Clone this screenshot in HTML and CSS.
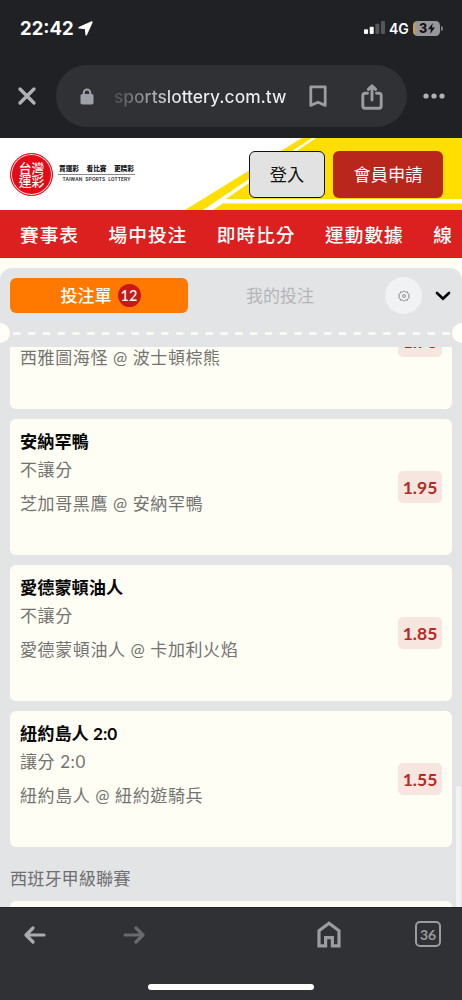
FILE: index.html
```html
<!DOCTYPE html>
<html lang="zh-Hant">
<head>
<meta charset="utf-8">
<title>台灣運彩</title>
<link rel="stylesheet" href="styles.css">
</head>
<body>
<div class="phone">
  <div class="status">
    <span class="time">22:42</span>
    <svg class="loc" width="15" height="15" viewBox="0 0 15 15"><path d="M13.9 1.1 8.2 13.7 7.6 7.4 1.1 6.8z" fill="#fff" stroke="#fff" stroke-width="1.6" stroke-linejoin="round"/></svg>
    <svg class="signal" width="21" height="14" viewBox="0 0 21 14"><rect x="0" y="8.2" width="4" height="4.8" rx="1" fill="#fff"/><rect x="5.7" y="5.8" width="4" height="7.2" rx="1" fill="#fff"/><rect x="11.4" y="2.8" width="4" height="10.2" rx="1" fill="#55565a"/><rect x="17" y="0" width="4" height="13" rx="1" fill="#55565a"/></svg>
    <span class="net">4G</span>
    <span class="battery"><span>3</span><svg width="7" height="11" viewBox="0 0 7 11"><path d="M4.8 0 0 6.2h3L2 11l5-6.4H4z" fill="#111"/></svg></span>
    <span class="nub"></span>
  </div>
  <div class="toolbar">
    <svg class="close" width="20" height="20" viewBox="0 0 20 20"><path d="M3 3 17 17M17 3 3 17" stroke="#b0b1b5" stroke-width="3.4" stroke-linecap="round"/></svg>
    <div class="address">
      <svg class="lock" width="14" height="17" viewBox="0 0 14 17"><path d="M3.8 7V4.6a3.2 3.2 0 0 1 6.4 0V7" fill="none" stroke="#9ea1a9" stroke-width="2"/><rect x=".5" y="6" width="13" height="10.5" rx="1.8" fill="#9ea1a9"/></svg>
      <span class="url">sportslottery.com.tw</span>
      <svg class="mark" width="18" height="23" viewBox="0 0 18 23"><path d="M1.8 1.8h14.4v18.6L9 17.2l-7.2 3.2z" fill="none" stroke="#9b9ca0" stroke-width="2.8" stroke-linejoin="round"/></svg>
      <svg class="share" width="22" height="26" viewBox="0 0 22 26"><path d="M6.500 9.2H4a2.2 2.2 0 0 0-2.2 2.2V22A2.2 2.2 0 0 0 4 24.2h14a2.2 2.2 0 0 0 2.2-2.2V11.400A2.200 2.200 0 0 0 18 9.200h-2.500M11 16V2.500M7.400 5.400 11 1.800 14.600 5.400" fill="none" stroke="#9b9ca0" stroke-width="2.9" stroke-linecap="round" stroke-linejoin="round"/></svg>
    </div>
    <svg class="more" width="22" height="6" viewBox="0 0 22 6"><g fill="#b0b1b5"><circle cx="3" cy="3" r="2.600"/><circle cx="11" cy="3" r="2.600"/><circle cx="19" cy="3" r="2.600"/></g></svg>
  </div>

  <header class="site">
    <svg class="stripes" width="462" height="72" viewBox="0 0 462 72"><path d="M185 72 302 0H462V72z" fill="#ffde00"/><path d="M203 72 249 41 312 0H316L249 45 226 61H462V65.500H223L213 72z" fill="#fffef8"/></svg>
    <div class="logo"><span>台灣</span><span>運彩</span></div>
    <div class="tagline">
      <div class="slogan"><span>買運彩</span><span>看比賽</span><span>更精彩</span></div>
      <div class="english">TAIWAN&nbsp; SPORTS&nbsp; LOTTERY</div>
    </div>
    <button class="login">登入</button>
    <button class="join">會員申請</button>
  </header>
  <nav class="nav"><span>賽事表</span><span>場中投注</span><span>即時比分</span><span>運動數據</span><span>線</span></nav>

  <main class="page">
    <section class="slip">
      <div class="tabs">
        <div class="tab active">投注單<span class="count">12</span></div>
        <div class="tab">我的投注</div>
        <div class="gear"><svg width="12" height="12" viewBox="0 0 12 12"><path d="M6 .8 7.400 2.100 9.300 1.700 9.800 3.500 11.400 4.600 10.500 6 11.400 7.600 9.800 8.600 9.300 10.400 7.400 10 6 11.300 4.600 10 2.700 10.400 2.200 8.600.6 7.600 1.500 6 .6 4.600 2.200 3.500 2.700 1.700 4.600 2.100z" fill="none" stroke="#777" stroke-width=".8" stroke-linejoin="round"/><circle cx="6" cy="6" r="1.500" fill="none" stroke="#777" stroke-width=".8"/></svg></div>
        <svg class="chev" width="16" height="10" viewBox="0 0 16 10"><path d="M2 2 8 7.800 14 2" fill="none" stroke="#000" stroke-width="2.600" stroke-linecap="round"/></svg>
      </div>
      <div class="perforation"><i></i><svg width="462" height="20" viewBox="0 0 462 20"><path d="M13.300 10.500H451" stroke="#fffefa" stroke-width="2.600" stroke-dasharray="7.200 7.600"/></svg><i></i></div>
      <div class="bets">
        <article class="bet first"><div class="info"><h3>波士頓棕熊</h3><p>不讓分</p><p class="match">西雅圖海怪 @ 波士頓棕熊</p></div><span class="odds">1.73</span></article>
        <article class="bet"><div class="info"><h3>安納罕鴨</h3><p>不讓分</p><p class="match">芝加哥黑鷹 @ 安納罕鴨</p></div><span class="odds">1.95</span></article>
        <article class="bet"><div class="info"><h3>愛德蒙頓油人</h3><p>不讓分</p><p class="match">愛德蒙頓油人 @ 卡加利火焰</p></div><span class="odds">1.85</span></article>
        <article class="bet"><div class="info"><h3>紐約島人 2:0</h3><p>讓分 2:0</p><p class="match">紐約島人 @ 紐約遊騎兵</p></div><span class="odds">1.55</span></article>
        <h2 class="league">西班牙甲級聯賽</h2>
        <article class="bet"></article>
        <div class="scrollbar"></div>
      </div>
    </section>
  </main>

  <footer class="bottom">
    <div class="icons">
      <svg class="back" width="22" height="18" viewBox="0 0 22 18"><path d="M20 9H2.500M9 2 2 9l7 7" fill="none" stroke="#aaabae" stroke-width="3.200" stroke-linecap="round" stroke-linejoin="round"/></svg>
      <svg class="fwd" width="22" height="18" viewBox="0 0 22 18"><path d="M2 9h17.500M13 2l7 7-7 7" fill="none" stroke="#696a6d" stroke-width="3.200" stroke-linecap="round" stroke-linejoin="round"/></svg>
      <svg class="home" width="24" height="27" viewBox="0 0 24 27"><path d="M2 24.800V9.800L12 2.200 22 9.800v15H15.400V16.600H8.600v8.200z" fill="none" stroke="#9b9ca0" stroke-width="3.200"/></svg>
      <div class="count-tabs">36</div>
    </div>
    <div class="indicator"></div>
  </footer>
</div>
</body>
</html>
```
FILE: styles.css
```css
* { box-sizing: border-box; }
body { margin: 0; background: #202124; font-family: Lato, "Noto Sans CJK TC", sans-serif; }
h2, h3, p { margin: 0; }
svg { display: block; flex: none; }
.phone { width: 462px; height: 1000px; overflow: hidden; display: flex; flex-direction: column; }

.status { height: 56px; flex: none; display: flex; align-items: center; padding: 0 19px 0 20px; color: #fff; font-family: Inter, sans-serif; }
.time { font-size: 18.5px; font-weight: 700; width: 58px; white-space: nowrap; }
.signal { margin: 0 4px 0 auto; }
.net { font-size: 14px; font-weight: 600; width: 24px; white-space: nowrap; }
.battery { width: 27px; height: 15px; border-radius: 4.5px; background: linear-gradient(90deg, #c5a33d 2px, #96969b 2px); color: #111; display: flex; align-items: center; justify-content: center; gap: 1px; font-size: 12.5px; font-weight: 800; padding-left: 1px; }
.nub { width: 2px; height: 5px; margin-left: 1px; border-radius: 0 2px 2px 0; background: #77787b; margin-right: 0; }
.signal { transform: translateX(0); }

.toolbar { height: 82px; flex: none; display: flex; align-items: flex-start; padding: 9px 0 0 17px; }
.close { margin: 21px 19px 0 0; }
.address { width: 351px; height: 62px; border-radius: 31px; background: #303134; display: flex; align-items: center; padding: 0 24px; }
.url { margin-left: 20px; width: 175px; font: 500 17.4px Inter, sans-serif; white-space: nowrap; background: linear-gradient(90deg, #4b4c50 0, #85868a 25px, #eeeef0 65px); -webkit-background-clip: text; background-clip: text; color: transparent; -webkit-text-stroke: 0; }
.mark { margin: 1px 0 0 21px; }
.share { margin: 1px 0 0 34px; }
.more { margin: 28px 0 0 16px; }

.site { height: 72px; flex: none; position: relative; background: #fff; display: flex; padding-left: 10px; }
.stripes { position: absolute; left: 0; top: 0; }
.site > :not(.stripes) { z-index: 1; }
.logo { width: 43px; height: 43px; margin-top: 15px; border-radius: 50%; background: #e30b18; border: 1px solid #e30b18; box-shadow: inset 0 0 0 1px #ffe5e2; color: #fff; font-size: 12.8px; line-height: 13px; font-weight: 500; display: flex; flex-direction: column; align-items: center; justify-content: center; white-space: nowrap; }
.tagline { width: 77px; margin: 24px 0 0 5px; color: #16181c; }
.slogan { display: flex; justify-content: space-between; height: 13px; font-size: 6.7px; line-height: 12px; font-weight: 900; border-bottom: 1px solid #888; padding: 0 1px; white-space: nowrap; }
.english { font: 500 5.1px/9px Roboto, sans-serif; letter-spacing: .16px; text-align: center; white-space: nowrap; }
button { font: 400 17.200px/1 Lato, "Noto Sans CJK TC", sans-serif; height: 47px; margin: 13px 0 0; border-radius: 6px; padding: 0; white-space: nowrap; }
.login { margin-left: 114px; width: 76px; border: 1px solid #111; background: #e2e2e2; color: #111; }
.join { margin-left: 8px; width: 110px; border: 0; background: #b8261c; color: #fff; }

.nav { height: 48px; flex: none; background: #dc1f1f; color: #fff; display: flex; gap: 29.500px; align-items: center; padding: 0 0 2px 20px; font-size: 18.700px; letter-spacing: 1px; font-weight: 500; white-space: nowrap; overflow: hidden; }
.nav span { flex: none; }

.page { height: 649px; flex: none; background: #fffef4; padding-top: 10px; }
.slip { height: 639px; background: #e3e4e6; border-radius: 12px 12px 0 0; display: flex; flex-direction: column; }
.tabs { height: 55px; display: flex; align-items: center; padding-left: 10px; flex: none; }
.tab { width: 178px; height: 35px; border-radius: 6px; display: flex; align-items: center; justify-content: center; font-size: 17px; color: #b5b5b7; white-space: nowrap; padding: 0 4px 2px 0; }
.tab.active { background: #ff7900; color: #fff; font-weight: 500; padding: 0 0 0 3px; line-height: 33px; }
.count { width: 23px; height: 23px; margin-left: 6px; border-radius: 50%; background: #c91818; font-size: 14.500px; line-height: 23px; text-align: center; }
.tab + .tab { margin-left: 5px; }
.gear { width: 37px; height: 37px; margin-left: 14px; border-radius: 50%; background: #f1f2f4; display: grid; place-items: center; }
.chev { margin-left: 13px; }
.perforation { height: 24px; flex: none; display: flex; justify-content: space-between; overflow: hidden; position: relative; }
.perforation svg { position: absolute; left: 0; top: 0; }
.perforation i { width: 20px; height: 20px; border-radius: 50%; background: #fffef7; margin: 0 -10px; }

.bets { position: relative; flex: 1; min-height: 0; overflow: hidden; padding: 0 10px; }
.bet { height: 136px; margin-bottom: 10px; border-radius: 6px; background: #fffef5; display: flex; align-items: center; padding: 0 10px; }
.bet.first { margin-top: -74px; }
.info { flex: 1; align-self: flex-start; padding-top: 9px; white-space: nowrap; }
.info h3 { font-size: 17.200px; font-weight: 700; line-height: 28px; color: #080808; }
.info p { font-size: 17px; letter-spacing: .6px; font-weight: 400; line-height: 28px; color: #737370; }
.info .match { margin-top: 6px; }
.odds { width: 44px; height: 32px; border-radius: 5px; background: #f7e6df; color: #b52a24; text-align: center; font-size: 17.500px; line-height: 33px; font-weight: 700; }
.league { height: 44px; line-height: 44px; font-size: 17.200px; font-weight: 400; color: #6f7072; }
.scrollbar { position: absolute; right: 1px; top: 439px; width: 5px; height: 130px; background: #f2f2f7; border-radius: 3px; }

.bottom { flex: 1; background: #303134; border-top: 1px solid #242528; display: flex; flex-direction: column; align-items: center; }
.icons { height: 76px; width: 100%; display: flex; align-items: flex-start; padding-left: 24px; }
.back { margin-top: 18px; }
.fwd { margin: 18px 0 0 77px; }
.home { margin: 13px 0 0 172px; }
.count-tabs { margin: 13px 0 0 74px; width: 26px; height: 26px; border: 2px solid #9b9ca0; border-radius: 5px; color: #9b9ca0; font: 700 14px/23px Lato, sans-serif; text-align: center; }
.indicator { width: 166px; height: 6px; border-radius: 3px; background: #fff; }
```
